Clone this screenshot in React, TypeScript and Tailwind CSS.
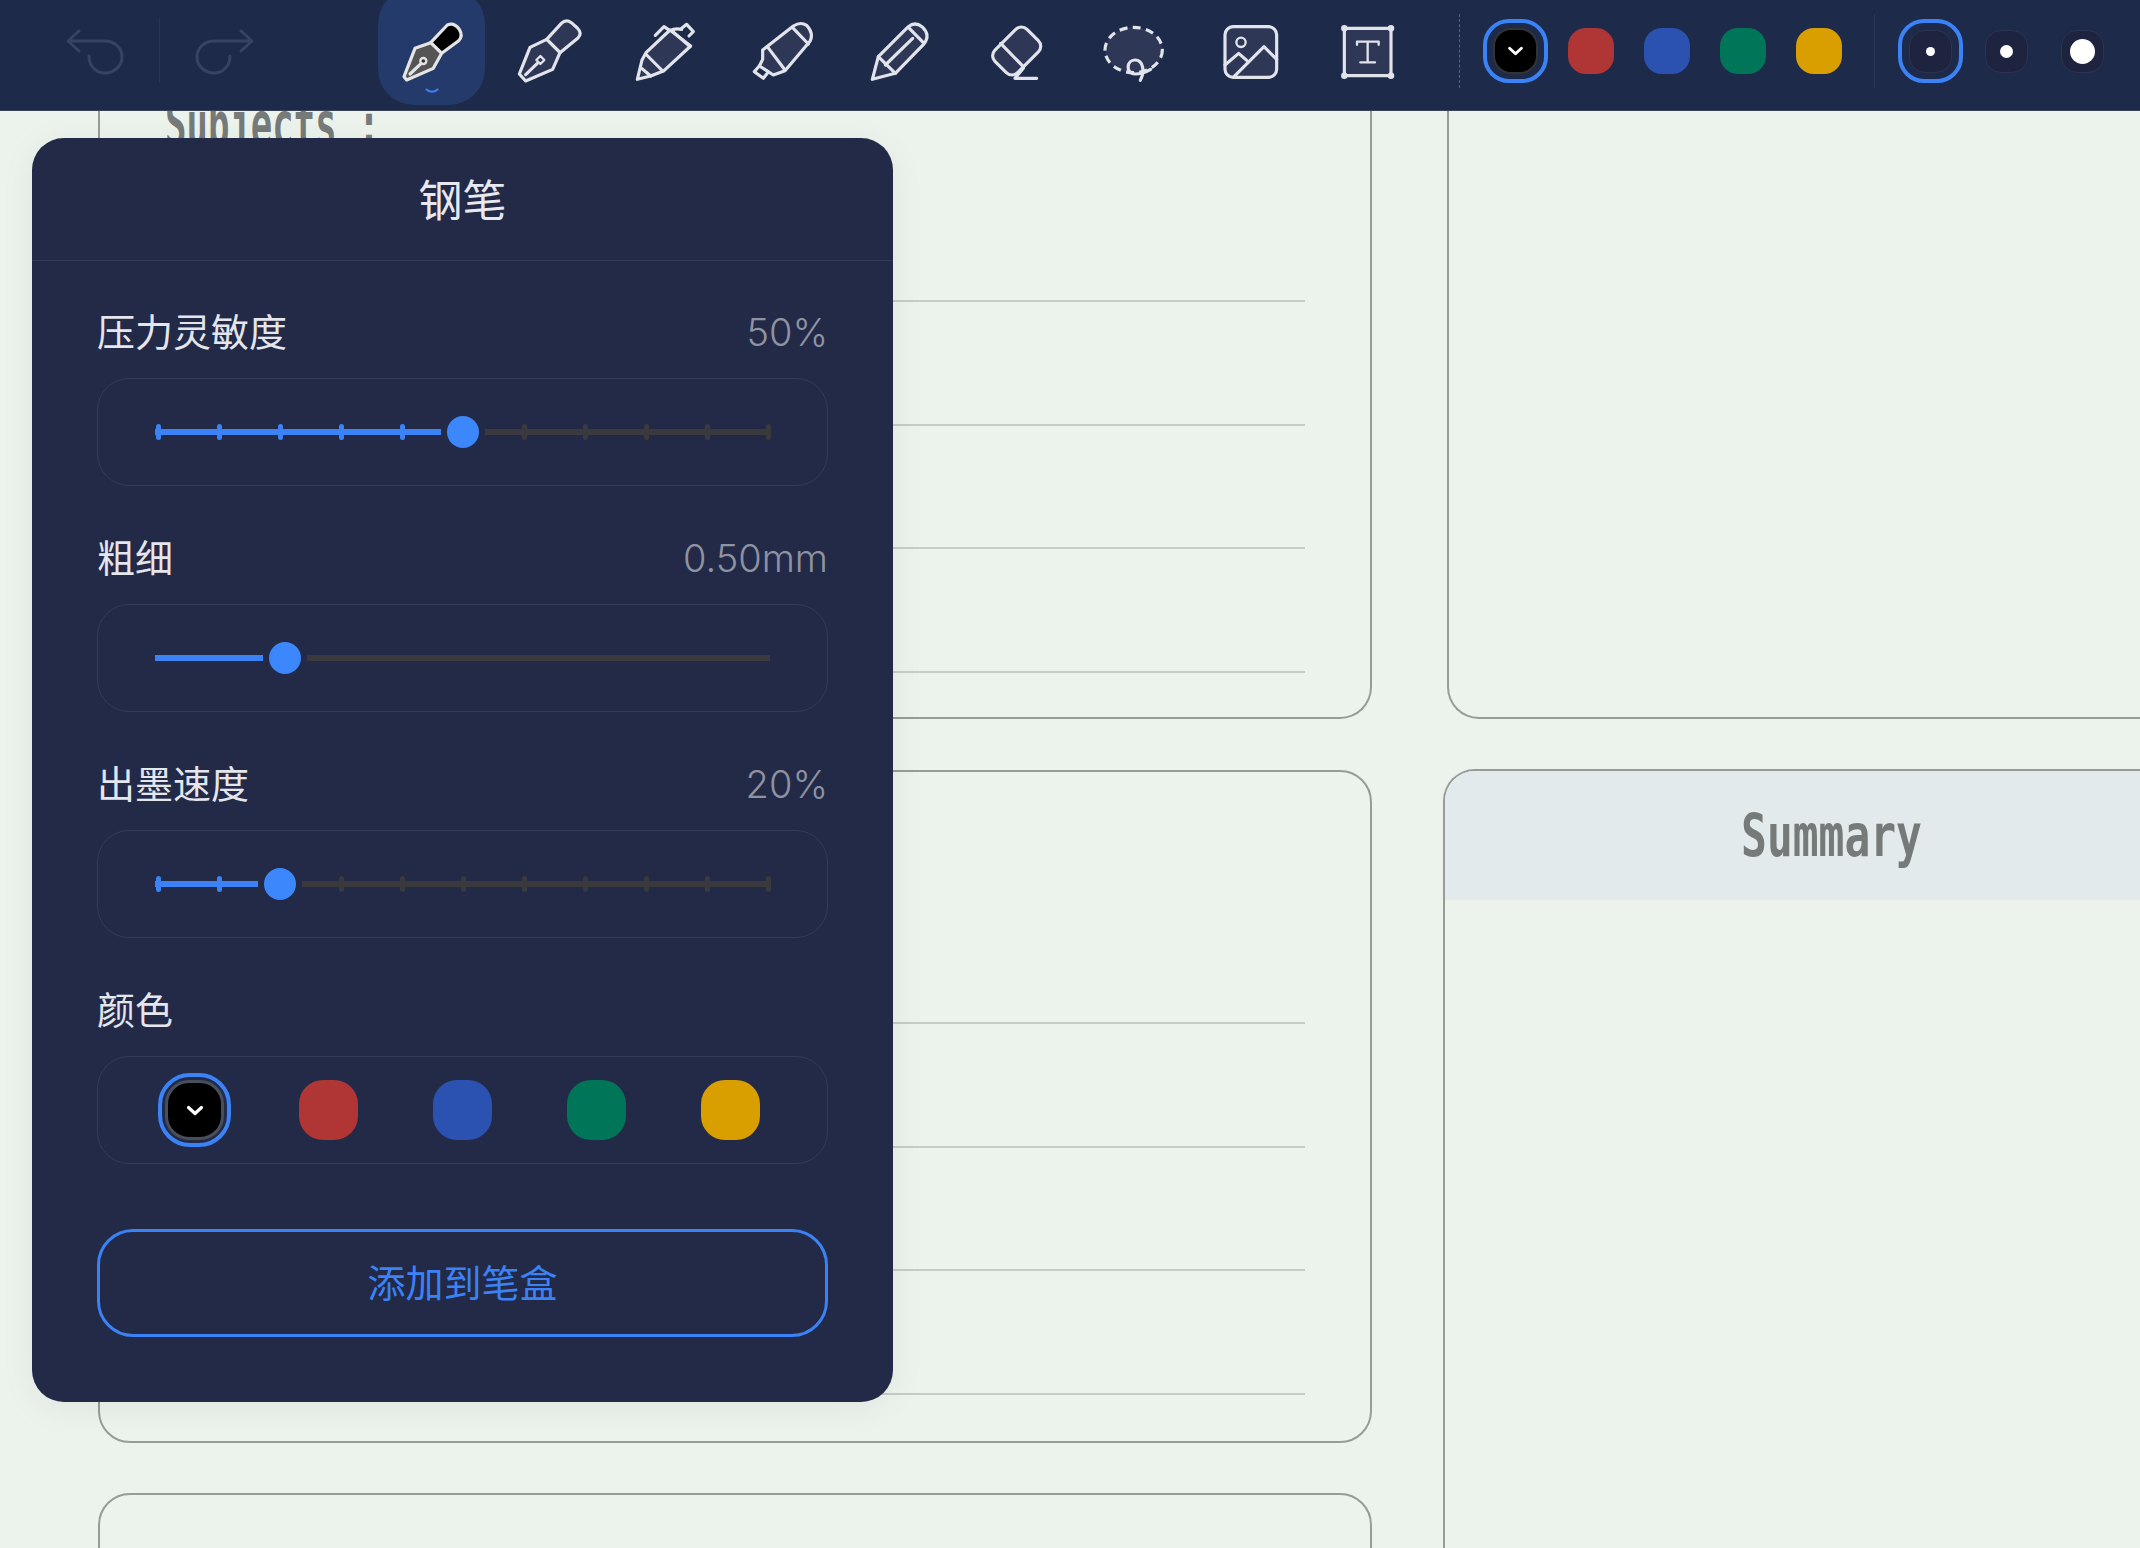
const ICON = '#e2e4ec'
const FILL = '#2f3757'

function Icon({ box, children }: { box: string; children: React.ReactNode }) {
  return (
    <svg viewBox={box} className="w-full h-full" fill="none" stroke={ICON} strokeWidth="9.5" strokeLinecap="round" strokeLinejoin="round">
      {children}
    </svg>
  )
}

const tools = [
  <Icon box="54 0 321 330" key="active">
    <path d="M212 128 L262 75 Q282 66 298 88 Q310 108 296 122 L245 160 Z" fill="#000" stroke="#e5e5e5" />
    <path d="M212 128 L165 145 L132 230 L140 240 L220 205 L245 160 Z" fill="#555" stroke="#e5e5e5" />
    <path d="M150 222 L186 188" />
    <circle cx="190" cy="183" r="9" fill="#333" stroke="#e5e5e5" strokeWidth="7" />
  </Icon>,
  <Icon box="405 0 321 330" key="fountain">
    <path d="M560 118 L604 70 Q618 56 634 68 L652 84 Q668 100 654 114 L600 158 Z" fill={FILL} />
    <path d="M560 118 L510 142 L478 222 L497 243 L578 208 L600 158 Z" fill={FILL} />
    <path d="M497 224 L532 190" />
    <path d="M541 168 L553 180 L541 192 L529 180 Z" strokeWidth="7" />
  </Icon>,
  <Icon box="-24 0 321 330" key="ball">
    <path d="M78 158 L150 90 L212 138 L132 212 L92 228 L52 238 L66 180 Z" fill={FILL} />
    <path d="M80 165 L128 213" />
    <path d="M65 205 L92 228" />
    <path d="M155 92 L210 140" />
    <path d="M106 106 L132 80 L150 92 Q165 84 185 88" />
    <path d="M185 85 L200 73 L220 95 L207 108" />
  </Icon>,
  <Icon box="327 0 321 330" key="marker">
    <path d="M428 150 L520 78 Q542 64 560 76 Q582 100 570 124 L495 212 L460 225 L440 212 L418 198 L428 178 Z" fill={FILL} />
    <path d="M442 140 L495 210" />
    <path d="M520 85 L565 132" />
    <path d="M418 198 L403 215 L430 235 L442 220" />
  </Icon>,
  <Icon box="0 0 321 330" key="pencil">
    <path d="M79 238 L97 170 L187 80 Q207 64 228 80 Q256 106 232 134 L148 220 Z" fill={FILL} />
    <path d="M97 170 L148 220" />
    <path d="M118 195 L200 115" />
    <path d="M187 82 L232 128" />
  </Icon>,
  <Icon box="9 0 321 330" key="eraser">
    <rect x="-68" y="-48" width="136" height="96" rx="24" transform="translate(170 153) rotate(-45)" fill={FILL} />
    <path d="M122 130 L190 200" />
    <path d="M190 205 L165 235 L230 235" />
  </Icon>,
  <Icon box="360 0 321 330" key="lasso">
    <ellipse cx="521" cy="150" rx="86" ry="68" fill={FILL} strokeDasharray="24 16" strokeLinecap="butt" />
    <path d="M541 241 C555 215 550 180 525 180 C500 180 495 220 525 222 C545 222 560 215 572 208" />
  </Icon>,
  <Icon box="0 0 321 330" key="image">
    <rect x="84" y="80" width="155" height="152" rx="24" fill={FILL} />
    <circle cx="132" cy="127" r="14" strokeWidth="7" />
    <path d="M84 195 L125 160 L150 182" />
    <path d="M111 230 L201 140 L239 178" />
  </Icon>,
  <Icon box="0 0 321 330" key="text">
    <rect x="91" y="85" width="140" height="142" fill={FILL} />
    <circle cx="91" cy="85" r="5" fill={ICON} />
    <circle cx="231" cy="85" r="5" fill={ICON} />
    <circle cx="91" cy="227" r="5" fill={ICON} />
    <circle cx="231" cy="227" r="5" fill={ICON} />
    <path d="M129 134 V125 H194 V134 M161 125 V187 M139 187 H183" strokeWidth="7" />
  </Icon>,
]

const colors = ['#b03535', '#2b52b0', '#007558', '#d99e00']

function Chevron({ className }: { className: string }) {
  return (
    <svg viewBox="0 0 18 11" className={className} fill="none" stroke="#fff" strokeWidth="3.2" strokeLinecap="round" strokeLinejoin="round">
      <path d="M2.5 2.5 L9 8.5 L15.5 2.5" />
    </svg>
  )
}

function Toolbar() {
  return (
    <div className="h-[111px] pb-[8px] flex items-center bg-[#1e2a4a] border-b border-[#3a4258] overflow-hidden">
      <svg viewBox="60 21 70 60" className="ml-[60px] w-[70px] h-[60px]" fill="none" stroke="#38435f" strokeWidth="3" strokeLinecap="round" strokeLinejoin="round">
        <path d="M79 31 L68 41 L79 51 M68 41 H104 C116 41 122 49 122 57 C122 66 114 73 105 73 C96 73 89 66 89 56" />
      </svg>
      <div className="ml-[29px] w-px h-[64px] bg-[#2c3654]" />
      <svg viewBox="190 21 70 60" className="ml-[30px] w-[70px] h-[60px]" fill="none" stroke="#38435f" strokeWidth="3" strokeLinecap="round" strokeLinejoin="round">
        <path d="M241 31 L252 41 L241 51 M252 41 H215 C203 41 197 49 197 57 C197 66 205 73 214 73 C223 73 230 66 230 56" />
      </svg>
      <div className="ml-[118px] flex gap-[10px] self-start h-[110px]">
        {tools.map((icon, i) => (
          <div key={i} className="relative w-[107px] h-full">
            {i === 0 && (
              <>
                <div className="absolute inset-x-0 -top-3 bottom-[5px] rounded-[36px] bg-[#243a6b]" />
                <svg viewBox="0 0 14 7" className="absolute left-[47px] top-[88px] w-[14px] h-[7px]" fill="none" stroke="#3b82f6" strokeWidth="2" strokeLinecap="round" strokeLinejoin="round">
                  <path d="M1.5 1.5 Q7 6 12.5 1.5" />
                </svg>
              </>
            )}
            <div className="relative w-full h-full">{icon}</div>
          </div>
        ))}
      </div>
      <div className="ml-[38px] w-px h-[74px] border-l border-dashed border-[#59627c]" />
      <div className="ml-[23px] w-[65px] h-[64px] flex items-center justify-center rounded-[26px] border-4 border-[#3b82f6]">
        <div className="w-[45px] h-[46px] flex items-center justify-center rounded-[18px] bg-black border-2 border-[#333]">
          <Chevron className="w-[17px] h-[10px]" />
        </div>
      </div>
      <div className="ml-[20px] flex gap-[30px]">
        {colors.map((c) => (
          <div key={c} className="w-[46px] h-[46px] rounded-[18px]" style={{ backgroundColor: c }} />
        ))}
      </div>
      <div className="ml-[32px] w-px h-[74px] bg-[#2c3654]" />
      <div className="ml-[23px] w-[65px] h-[64px] flex items-center justify-center rounded-[26px] border-4 border-[#3b82f6]">
        <div className="w-[43px] h-[43px] flex items-center justify-center rounded-[16px] bg-[#1e2440] border border-[#2c3350]">
          <div className="w-[9px] h-[9px] rounded-full bg-white" />
        </div>
      </div>
      <div className="ml-[22px] w-[43px] h-[43px] flex items-center justify-center rounded-[16px] bg-[#1e2440] border border-[#2c3350]">
        <div className="w-[13px] h-[13px] rounded-full bg-white" />
      </div>
      <div className="ml-[33px] w-[43px] h-[43px] flex items-center justify-center rounded-[16px] bg-[#1e2440] border border-[#2c3350]">
        <div className="w-[25px] h-[25px] rounded-full bg-white" />
      </div>
    </div>
  )
}

function Lines() {
  return (
    <div className="flex flex-col gap-[121.5px] px-[65px]">
      {[0, 1, 2, 3].map((i) => (
        <div key={i} className="h-[2px] bg-[#c6cbc6]" />
      ))}
    </div>
  )
}

function Paper() {
  const handFont = "[font-family:'DejaVu_Sans_Mono',monospace] font-bold text-[#767b79]"
  return (
    <div className="flex h-[1437px] overflow-hidden bg-[#ebf3ec]">
      <div className="ml-[98px] w-[1274px] shrink-0 flex flex-col">
        <div className="h-[608px] shrink-0 pt-[189px] relative border-x-2 border-b-2 border-[#979c98] rounded-b-[32px]">
          <div className={`absolute left-[65px] -top-[21px] text-[62px] leading-[70px] whitespace-nowrap origin-left scale-x-[.575] ${handFont}`}>Subjects :</div>
          <Lines />
        </div>
        <div className="mt-[51px] h-[673px] shrink-0 pt-[250px] border-2 border-[#979c98] rounded-[32px]">
          <Lines />
        </div>
        <div className="mt-[50px] h-[200px] shrink-0 border-2 border-[#979c98] rounded-t-[32px]" />
      </div>
      <div className="flex-1 flex flex-col ml-[71px]">
        <div className="ml-[4px] w-[900px] h-[608px] shrink-0 border-l-2 border-b-2 border-[#979c98] rounded-bl-[32px]" />
        <div className="mt-[50px] w-[900px] h-[900px] shrink-0 border-l-2 border-t-2 border-[#979c98] rounded-tl-[32px] overflow-hidden">
          <div className="h-[129px] bg-[#e3eaec] flex items-center">
            <div className={`w-[773px] text-center text-[58px] leading-none scale-x-[.74] ${handFont}`}>Summary</div>
          </div>
        </div>
      </div>
    </div>
  )
}

function PanelSlider({ label, value, pct, ticks }: { label: string; value: string; pct: number; ticks: boolean }) {
  return (
    <div>
      <div className="h-[46px] flex items-center justify-between text-[38px] leading-none">
        <span className="text-[#e4e6ec]">{label}</span>
        <span className="text-[#8f93a1] font-light">{value}</span>
      </div>
      <div className="mt-[23px] h-[108px] flex items-center px-[57px] rounded-[32px] border border-[#333b58]">
        <div className="relative w-full h-[32px] -mt-[1px]">
          <div className="absolute left-0 top-[13px] h-[6px] bg-[#3b82f6]" style={{ width: `calc(${pct}% - 22px)` }} />
          <div className="absolute right-0 top-[13px] h-[6px] bg-[#3a3a3e]" style={{ left: `calc(${pct}% + 22px)` }} />
          {ticks &&
            Array.from({ length: 11 }).map((_, i) => {
              const at = 0.49 + 9.92 * i
              if (Math.abs(at - pct) < 1) return null
              return (
                <div
                  key={i}
                  className="absolute top-[8px] w-[5px] h-[16px] -ml-[2.5px] rounded-full"
                  style={{ left: `${at}%`, backgroundColor: at < pct ? '#3b82f6' : '#3a3a3e' }}
                />
              )
            })}
          <div className="absolute top-0 w-[32px] h-[32px] -ml-[16px] rounded-full bg-[#3b87fb]" style={{ left: `${pct}%` }} />
        </div>
      </div>
    </div>
  )
}

function PenPanel() {
  return (
    <div className="absolute left-[32px] top-[138px] w-[861px] h-[1264px] rounded-[32px] bg-[#222a48] shadow-[0_6px_36px_rgba(0,0,0,0.06)]">
      <div className="h-[123px] pt-[3px] flex items-center justify-center border-b border-[#323a58] text-[44px] leading-none text-[#e8e9ee]">钢笔</div>
      <div className="px-[65px] pt-[48px] flex flex-col gap-[49px]">
        <PanelSlider label="压力灵敏度" value="50%" pct={50} ticks />
        <PanelSlider label="粗细" value="0.50mm" pct={21.2} ticks={false} />
        <PanelSlider label="出墨速度" value="20%" pct={20.4} ticks />
        <div>
          <div className="h-[46px] flex items-center text-[38px] leading-none text-[#e4e6ec]">颜色</div>
          <div className="mt-[23px] h-[108px] flex items-center justify-center gap-[75px] rounded-[32px] border border-[#333b58]">
            <div className="relative w-[59px] h-[60px] flex items-center justify-center rounded-[24px] bg-black border-[3px] border-[#4a4d5a]">
              <div className="absolute -inset-[10px] rounded-[32px] border-4 border-[#3b82f6]" />
              <Chevron className="w-[18px] h-[11px]" />
            </div>
            {colors.map((c) => (
              <div key={c} className="w-[59px] h-[60px] rounded-[24px]" style={{ backgroundColor: c }} />
            ))}
          </div>
        </div>
      </div>
      <div className="mx-[65px] mt-[65px] h-[108px] flex items-center justify-center rounded-[36px] border-[3px] border-[#3b82f6] text-[38px] leading-none text-[#3b82f6]">添加到笔盒</div>
    </div>
  )
}

export default function App() {
  return (
    <div className="relative w-[2140px] h-[1548px] overflow-hidden bg-[#ebf3ec] font-['Inter','Noto_Sans_CJK_SC',sans-serif]">
      <Toolbar />
      <Paper />
      <PenPanel />
    </div>
  )
}
